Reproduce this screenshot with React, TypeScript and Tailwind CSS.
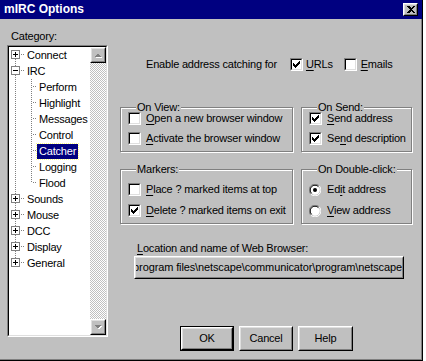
import type { ReactNode } from "react";

const GREY = "bg-[#c0c0c0]";

function Check({ checked }: { checked?: boolean }) {
  const px = [
    [6, 0], [5, 1], [6, 1], [0, 2], [4, 2], [5, 2], [6, 2],
    [0, 3], [1, 3], [3, 3], [4, 3], [5, 3],
    [0, 4], [1, 4], [2, 4], [3, 4], [4, 4],
    [1, 5], [2, 5], [3, 5], [2, 6],
  ];
  return (
    <span className="w-[13px] h-[13px] shrink-0 border border-t-[#808080] border-l-[#808080] border-r-white border-b-white">
      <span className="w-full h-full bg-white border border-t-black border-l-black border-r-[#dfdfdf] border-b-[#dfdfdf] grid place-items-center">
        {checked && (
          <svg width="7" height="7" viewBox="0 0 7 7" shapeRendering="crispEdges">
            {px.map(([x, y]) => (
              <rect key={`${x}-${y}`} x={x} y={y} width="1" height="1" fill="#000" />
            ))}
          </svg>
        )}
      </span>
    </span>
  );
}

function Radio({ checked }: { checked?: boolean }) {
  return (
    <svg width="12" height="12" viewBox="0 0 12 12" className="shrink-0">
      <path d="M10.2 1.8A5.8 5.8 0 0 0 1.8 10.2" stroke="#808080" strokeWidth="1" fill="none" />
      <path d="M1.8 10.2A5.8 5.8 0 0 0 10.2 1.8" stroke="#fff" strokeWidth="1" fill="none" />
      <circle cx="6" cy="6" r="4.8" fill="#fff" />
      <path d="M9.4 2.6A4.8 4.8 0 0 0 2.6 9.4" stroke="#000" strokeWidth="1" fill="none" />
      {checked && <circle cx="6" cy="6" r="2" fill="#000" />}
    </svg>
  );
}

function Label({ text, u }: { text: string; u: number }) {
  return (
    <span>
      {text.slice(0, u)}
      <span className="underline underline-offset-[2px]">{text[u]}</span>
      {text.slice(u + 1)}
    </span>
  );
}

function Group({ title, className, children }: { title: string; className: string; children: ReactNode }) {
  return (
    <fieldset className={"border border-[#808080] shadow-[inset_1px_1px_0_#fff,1px_1px_0_#fff] " + className}>
      <legend className="ml-[8px] px-[1px] leading-[10px] bg-[#c0c0c0]">{title}</legend>
      {children}
    </fieldset>
  );
}

function Raised({ children, className }: { children: ReactNode; className: string }) {
  return (
    <div className={"border border-t-white border-l-white border-r-black border-b-black " + className}>
      <div className="w-full h-full border border-t-[#dfdfdf] border-l-[#dfdfdf] border-r-[#808080] border-b-[#808080] flex items-center justify-center">
        {children}
      </div>
    </div>
  );
}

function Arrow({ up }: { up?: boolean }) {
  return (
    <svg width="8" height="5" viewBox="0 0 8 5" shapeRendering="crispEdges">
      <path d={up ? "M1 5h7L4.5 1.5z" : "M1 1h7L4.5 4.5z"} fill="#fff" />
      <path d={up ? "M0 4h7L3.5 0.5z" : "M0 0h7L3.5 3.5z"} fill="#808080" />
    </svg>
  );
}

type Node = { label: string; level: 0 | 1; sign?: "+" | "-"; selected?: boolean };

const tree: Node[] = [
  { label: "Connect", level: 0, sign: "+" },
  { label: "IRC", level: 0, sign: "-" },
  { label: "Perform", level: 1 },
  { label: "Highlight", level: 1 },
  { label: "Messages", level: 1 },
  { label: "Control", level: 1 },
  { label: "Catcher", level: 1, selected: true },
  { label: "Logging", level: 1 },
  { label: "Flood", level: 1 },
  { label: "Sounds", level: 0, sign: "+" },
  { label: "Mouse", level: 0, sign: "+" },
  { label: "DCC", level: 0, sign: "+" },
  { label: "Display", level: 0, sign: "+" },
  { label: "General", level: 0, sign: "+" },
];

function Gutter({ node, first, last, lastChild }: { node: Node; first: boolean; last: boolean; lastChild: boolean }) {
  const dot = { stroke: "#808080", strokeWidth: 1, strokeDasharray: "1 1" };
  if (node.level === 1) {
    return (
      <svg width="28" height="16" className="shrink-0" shapeRendering="crispEdges">
        <line x1="6.5" y1="0" x2="6.5" y2="16" {...dot} />
        <line x1="22.5" y1="0" x2="22.5" y2={lastChild ? 8 : 16} {...dot} />
        <line x1="24" y1="7.5" x2="28" y2="7.5" {...dot} />
      </svg>
    );
  }
  return (
    <svg width="16" height="16" className="shrink-0" shapeRendering="crispEdges">
      {!first && <line x1="6.5" y1="0" x2="6.5" y2="3" {...dot} />}
      {!last && <line x1="6.5" y1="12" x2="6.5" y2="16" {...dot} />}
      <line x1="12" y1="7.5" x2="16" y2="7.5" {...dot} />
      <rect x="2.5" y="3.5" width="8" height="8" fill="#fff" stroke="#808080" />
      <line x1="4" y1="7.5" x2="9" y2="7.5" stroke="#000" />
      {node.sign === "+" && <line x1="6.5" y1="5" x2="6.5" y2="10" stroke="#000" />}
    </svg>
  );
}

function Tree() {
  return (
    <div className="w-[101px] h-[292px] border border-t-[#808080] border-l-[#808080] border-r-white border-b-white">
      <div className="w-full h-full border border-t-black border-l-black border-r-[#dfdfdf] border-b-[#dfdfdf] bg-white flex">
        <div className="flex-1 flex flex-col">
          {tree.map((n, i) => (
            <div key={n.label} className="h-[16px] flex items-center">
              <Gutter
                node={n}
                first={i === 0}
                last={i === tree.length - 1}
                lastChild={n.level === 1 && tree[i + 1]?.level !== 1}
              />
              <span
                className={
                  "px-[2px] h-[15px] leading-[15px] " +
                  (n.selected ? "bg-[#000080] text-white outline outline-1 outline-dotted outline-[#ffff80]" : "")
                }
              >
                {n.label}
              </span>
            </div>
          ))}
        </div>
        <div className="w-[16px] flex flex-col bg-[repeating-conic-gradient(#c0c0c0_0_25%,#fff_0_50%)] bg-[length:2px_2px]">
          <Raised className={"w-[16px] h-[16px] " + GREY}>
            <Arrow up />
          </Raised>
          <div className="flex-1" />
          <Raised className={"w-[16px] h-[16px] " + GREY}>
            <Arrow />
          </Raised>
        </div>
      </div>
    </div>
  );
}

export default function App() {
  return (
    <div className="w-[426px] h-[361px] bg-white flex font-['Liberation_Sans',Arial,sans-serif] text-[11px] tracking-[-0.2px] text-black leading-[13px]">
      <div className={"w-[423px] h-[361px] flex flex-col border-r border-b border-black shadow-[inset_-1px_-1px_0_#808080] " + GREY}>
        {/* title bar */}
        <div className="h-[19px] bg-[#000080] flex items-center pl-[4px] pr-[4px]">
          <span className="text-white font-bold text-[12px] tracking-[0px] flex-1">mIRC Options</span>
          <Raised className={"w-[15px] h-[13px] " + GREY}>
            <svg width="8" height="7" viewBox="0 0 8 7" shapeRendering="crispEdges">
              <path d="M0 0h2l2 2 2-2h2L5 3.5 8 7H6L4 5 2 7H0l3-3.5z" fill="#000" />
            </svg>
          </Raised>
        </div>

        <div className="flex-1 flex">
          {/* left: category */}
          <div className="pl-[7px] pt-[11px] flex flex-col gap-[2px]">
            <span className="pl-[4px]">Category:</span>
            <Tree />
          </div>

          {/* right: options */}
          <div className="ml-[12px] w-[292px] flex flex-col">
            <div className="mt-[39px] h-[13px] flex items-center pl-[26px]">
              <span className="mr-[13px]">Enable address catching for</span>
              <Check checked />
              <span className="ml-[3px] mr-[11px]">
                <Label text="URLs" u={0} />
              </span>
              <Check />
              <span className="ml-[4px]">
                <Label text="Emails" u={0} />
              </span>
            </div>

            <div className="mt-[31px] flex gap-[8px]">
              <Group title="On View:" className="w-[173px] pl-[7px] pb-[6px] flex flex-col gap-[7px]">
                <div className="flex items-center h-[13px]">
                  <Check />
                  <span className="ml-[5px]"><Label text="Open a new browser window" u={0} /></span>
                </div>
                <div className="flex items-center h-[13px]">
                  <Check />
                  <span className="ml-[5px]"><Label text="Activate the browser window" u={0} /></span>
                </div>
              </Group>
              <Group title="On Send:" className="w-[111px] pl-[7px] pb-[6px] flex flex-col gap-[7px]">
                <div className="flex items-center h-[13px]">
                  <Check checked />
                  <span className="ml-[5px]"><Label text="Send address" u={0} /></span>
                </div>
                <div className="flex items-center h-[13px]">
                  <Check checked />
                  <span className="ml-[5px]"><Label text="Send description" u={2} /></span>
                </div>
              </Group>
            </div>

            <div className="mt-[12px] flex gap-[8px]">
              <Group title="Markers:" className="w-[173px] pl-[7px] pt-[9px] pb-[6px] flex flex-col gap-[8px]">
                <div className="flex items-center h-[13px]">
                  <Check />
                  <span className="ml-[5px]"><Label text="Place ? marked items at top" u={0} /></span>
                </div>
                <div className="flex items-center h-[13px]">
                  <Check checked />
                  <span className="ml-[5px]"><Label text="Delete ? marked items on exit" u={0} /></span>
                </div>
              </Group>
              <Group title="On Double-click:" className="w-[111px] pl-[7px] pt-[9px] pb-[6px] flex flex-col gap-[8px]">
                <div className="flex items-center h-[13px]">
                  <Radio checked />
                  <span className="ml-[6px]"><Label text="Edit address" u={2} /></span>
                </div>
                <div className="flex items-center h-[13px]">
                  <Radio />
                  <span className="ml-[6px]"><Label text="View address" u={0} /></span>
                </div>
              </Group>
            </div>

            <span className="mt-[18px] ml-[17px]">
              <Label text="Location and name of Web Browser:" u={0} />
            </span>
            <div className="ml-[14px] mt-[1px] w-[270px] h-[23px] border border-t-white border-l-white border-r-black border-b-black">
              <div className="w-full h-full border border-t-[#dfdfdf] border-l-[#dfdfdf] border-r-[#808080] border-b-[#808080] flex items-center justify-end overflow-hidden whitespace-nowrap tracking-[-0.12px]">
                <span>c:\program files\netscape\communicator\program\netscape</span>
              </div>
            </div>

            <div className="mt-[47px] ml-[60px] flex gap-[5px]">
              <div className="border border-black">
                <Raised className="w-[52px] h-[23px]">OK</Raised>
              </div>
              <Raised className="w-[54px] h-[25px]">Cancel</Raised>
              <Raised className="w-[55px] h-[25px]">Help</Raised>
            </div>
          </div>
        </div>
      </div>
    </div>
  );
}
